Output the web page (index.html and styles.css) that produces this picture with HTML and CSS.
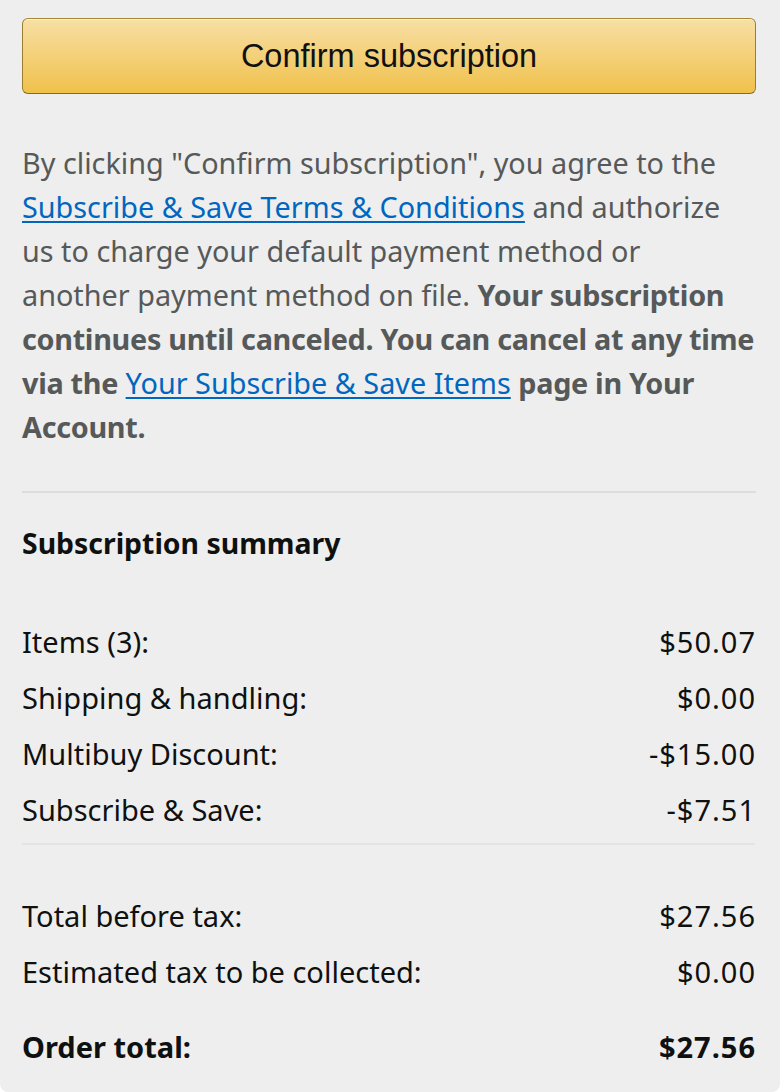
FILE: index.html
```html
<!DOCTYPE html>
<html lang="en">
<head>
<meta charset="utf-8">
<title>Confirm subscription</title>
<link rel="stylesheet" href="styles.css">
</head>
<body>
<div class="panel">
  <button class="confirm-btn" type="button">Confirm subscription</button>
  <p class="legal">By clicking "Confirm subscription", you agree to the<br><a href="#">Subscribe &amp; Save Terms &amp; Conditions</a> and authorize<br>us to charge your default payment method or<br>another payment method on file. <b>Your subscription<br>continues until canceled. You can cancel at any time<br>via the</b> <a href="#">Your Subscribe &amp; Save Items</a> <b>page in Your<br>Account.</b></p>
  <hr class="divider">
  <h2 class="summary-title">Subscription summary</h2>
  <div class="rows">
    <div class="row"><span>Items (3):</span><span class="amount">$50.07</span></div>
    <div class="row"><span>Shipping &amp; handling:</span><span class="amount">$0.00</span></div>
    <div class="row"><span>Multibuy Discount:</span><span class="amount">-$15.00</span></div>
    <div class="row"><span>Subscribe &amp; Save:</span><span class="amount">-$7.51</span></div>
  </div>
  <hr class="divider divider-light">
  <div class="rows totals">
    <div class="row"><span>Total before tax:</span><span class="amount">$27.56</span></div>
    <div class="row"><span>Estimated tax to be collected:</span><span class="amount">$0.00</span></div>
    <div class="row row-total"><span>Order total:</span><span class="amount">$27.56</span></div>
  </div>
</div>
</body>
</html>
```

FILE: styles.css
```css
html, body {
  margin: 0;
  padding: 0;
  background: #ffffff;
}

.panel {
  width: 780px;
  height: 1092px;
  box-sizing: border-box;
  background: #eeeeee;
  border-radius: 0 0 8px 8px;
  padding: 18px 24px 0 22px;
  font-family: "Noto Sans", "DejaVu Sans", sans-serif;
  color: #0f1111;
}

.confirm-btn {
  display: block;
  width: 100%;
  height: 76px;
  margin: 0;
  padding: 0;
  border: 1px solid;
  border-color: #a88734 #9c7e31 #846a29;
  border-radius: 6px;
  background: linear-gradient(to bottom, #f7dfa5, #f0c14b);
  box-shadow: inset 0 1px 0 rgba(255, 255, 255, 0.6);
  font-family: "Liberation Sans", Arial, sans-serif;
  font-size: 32.5px;
  color: #111111;
  cursor: pointer;
}

.legal {
  margin: 47px 0 0;
  font-size: 28.8px;
  line-height: 44px;
  color: #565959;
  white-space: nowrap;
}

.legal b {
  font-weight: 700;
  letter-spacing: -0.3px;
}

.legal a {
  color: #0066c0;
  text-decoration: underline;
  text-underline-offset: 3px;
}

.divider {
  margin: 42px 0 0;
  border: 0;
  height: 2px;
  background: #dddddd;
}

.divider-light {
  margin-top: 5px;
  background: #e4e4e4;
  width: 733px;
}

.summary-title {
  margin: 28px 0 0;
  font-size: 28.4px;
  line-height: 44px;
  font-weight: 700;
  color: #0f1111;
}

.rows {
  margin-top: 49px;
  display: flex;
  flex-direction: column;
}

.totals {
  margin-top: 43px;
}

.row {
  display: flex;
  justify-content: space-between;
  font-size: 29px;
  line-height: 56px;
  color: #0f1111;
}

.amount {
  letter-spacing: 1px;
}

.row-total {
  margin-top: 19px;
  font-weight: 700;
}
```
